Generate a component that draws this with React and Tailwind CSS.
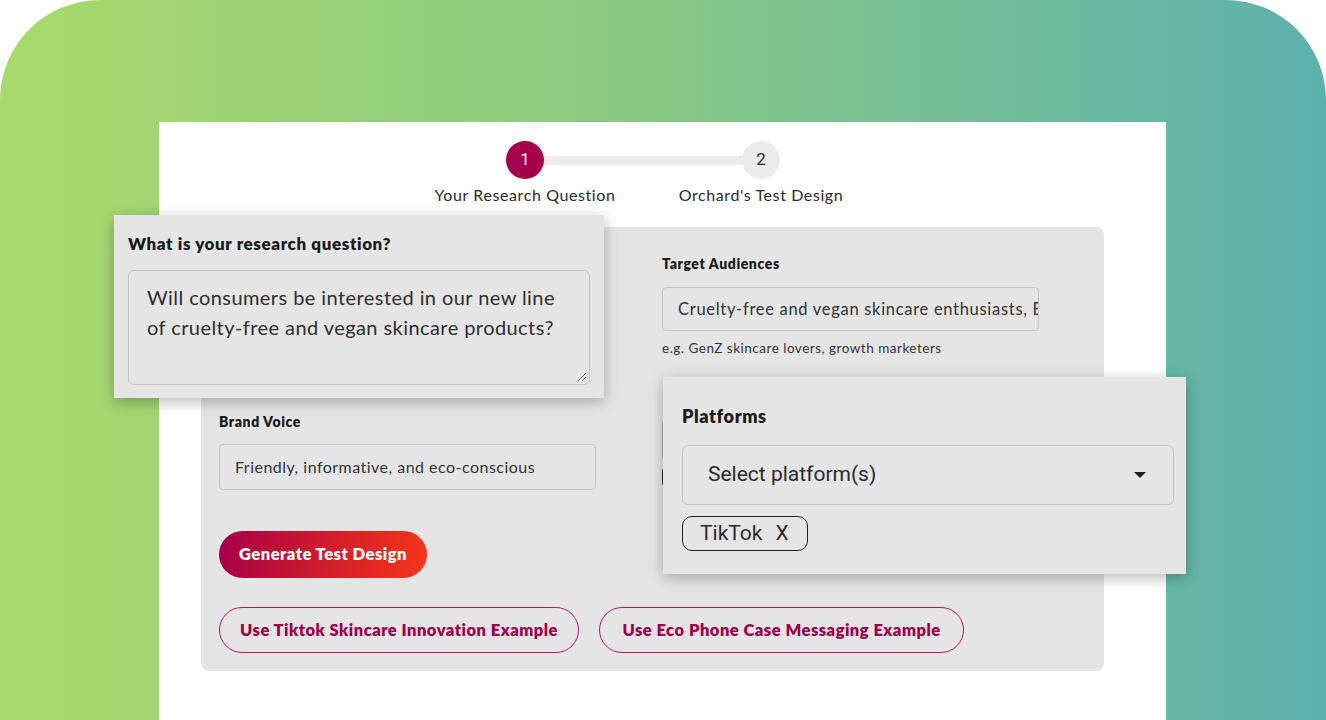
import React from "react";

const F = { fontFamily: "Lato, 'Open Sans', sans-serif" };
const R = { fontFamily: "Roboto, 'Liberation Sans', sans-serif" };

export default function App() {
  return (
    <div className="w-[1326px] h-[720px] bg-white overflow-hidden" style={F}>
      <div className="relative w-[1326px] h-[720px] rounded-t-[100px] bg-[linear-gradient(90deg,#a9d96c_0%,#8cca82_45%,#5cb1ae_100%)] pt-[122px] pl-[159px]">
        {/* white panel */}
        <div className="w-[1007px] h-[598px] bg-white flex flex-col">
          {/* stepper */}
          <div className="relative ml-[266px] mt-[19px] flex gap-[36px] w-[436px]">
            <div className="absolute left-[100px] right-[100px] top-[15px] h-[9px] bg-[#ececec]" />
            <div className="relative w-[200px] flex flex-col items-center">
              <div className="w-[38px] h-[38px] rounded-full bg-[#a4004b] text-white flex items-center justify-center text-[17px]" style={R}>1</div>
              <div className="mt-[6px] text-[16px] leading-[20px] tracking-[0.6px] text-[#2a2a2a] whitespace-nowrap">Your Research Question</div>
            </div>
            <div className="relative w-[200px] flex flex-col items-center">
              <div className="w-[38px] h-[38px] rounded-full bg-[#ececec] text-[#2a2a2a] flex items-center justify-center text-[17px]" style={R}>2</div>
              <div className="mt-[6px] text-[16px] leading-[20px] tracking-[0.6px] text-[#2a2a2a] whitespace-nowrap">Orchard's Test Design</div>
            </div>
          </div>

          {/* gray card */}
          <div className="ml-[42px] mt-[22px] w-[903px] h-[444px] rounded-[8px] bg-[#e5e5e5] pl-[18px] pt-[27px]">
            <div className="flex gap-[66px] h-[236px]">
              {/* left column */}
              <div className="w-[377px] flex flex-col">
                <div className="h-[158px]" />
                <div className="h-[20px] text-[14px] leading-[20px] font-extrabold tracking-[0.6px] text-[#1a1a1a]">Brand Voice</div>
                <div className="mt-[12px] h-[46px] rounded-[4px] border border-[#c4c4c4] flex items-center pl-[15px] text-[16px] tracking-[0.48px] text-[#333]">
                  Friendly, informative, and eco-conscious
                </div>
              </div>
              {/* right column */}
              <div className="w-[377px] flex flex-col">
                <div className="h-[20px] text-[14px] leading-[20px] font-extrabold tracking-[0.6px] text-[#1a1a1a]">Target Audiences</div>
                <div className="mt-[13px] h-[45px] rounded-[4px] border border-[#c4c4c4] flex items-center pl-[15px] text-[16.5px] tracking-[0.7px] text-[#333] overflow-hidden whitespace-nowrap">
                  Cruelty-free and vegan skincare enthusiasts, Eco
                </div>
                <div className="mt-[8px] h-[18px] text-[13.5px] leading-[18px] tracking-[0.5px] text-[#333] whitespace-nowrap">e.g. GenZ skincare lovers, growth marketers</div>
                <div className="mt-[62px] h-[43px] rounded-[4px] border border-[#b5b5b5]" />
                <div className="mt-[3px] w-[100px] h-[27px] rounded-[8px] border-[1.5px] border-[#222]" />
              </div>
            </div>

            <div className="mt-[41px] w-[208px] h-[47px] rounded-full bg-[linear-gradient(100deg,#a5004a_0%,#d01c2c_50%,#f7361a_100%)] text-white font-extrabold tracking-[0.5px] text-[16.5px] flex items-center justify-center">
              Generate Test Design
            </div>

            <div className="mt-[29px] flex gap-[20px]">
              <div className="w-[360px] h-[46px] rounded-full border border-[#b2195e] text-[#a0004a] font-extrabold tracking-[0.5px] text-[16.5px] flex items-center justify-center whitespace-nowrap">
                Use Tiktok Skincare Innovation Example
              </div>
              <div className="w-[365px] h-[46px] rounded-full border border-[#b2195e] text-[#a0004a] font-extrabold tracking-[0.5px] text-[16.5px] flex items-center justify-center whitespace-nowrap">
                Use Eco Phone Case Messaging Example
              </div>
            </div>
          </div>
        </div>

        {/* floating research question card */}
        <div className="absolute left-[114px] top-[215px] w-[490px] h-[183px] bg-[#e5e5e5] shadow-[0_4px_14px_rgba(0,0,0,0.28)] pl-[14px] pt-[18px]">
          <div className="text-[17px] leading-[22px] font-extrabold tracking-[0.6px] text-[#1a1a1a]">What is your research question?</div>
          <div className="relative mt-[15px] w-[462px] h-[115px] rounded-[6px] border-[1.5px] border-[#c4c4c4] pl-[18px] pt-[11px] text-[20px] leading-[30px] tracking-[0.43px] text-[#2e2e2e] whitespace-nowrap">
            Will consumers be interested in our new line
            <br />
            of cruelty-free and vegan skincare products?
            <svg className="absolute right-[2px] bottom-[2px]" width="12" height="12" viewBox="0 0 12 12">
              <path d="M11 3 L3 11 M11 7 L7 11" stroke="#6b6b6b" strokeWidth="1" fill="none" />
            </svg>
          </div>
        </div>

        {/* floating platforms card */}
        <div className="absolute left-[663px] top-[377px] w-[523px] h-[197px] bg-[#e5e5e5] shadow-[0_4px_14px_rgba(0,0,0,0.28)] pl-[19px] pt-[28px]">
          <div className="text-[18px] leading-[22px] font-extrabold tracking-[0.6px] text-[#1a1a1a]">Platforms</div>
          <div className="mt-[18px] w-[492px] h-[60px] rounded-[6px] border-[1.5px] border-[#c4c4c4] flex items-center justify-between pl-[25px] pr-[27px]">
            <span className="text-[21px] text-[#2a2a2a]" style={R}>Select platform(s)</span>
            <svg width="12" height="6" viewBox="0 0 12 6">
              <path d="M0 0 L12 0 L6 6 Z" fill="#1f1f1f" />
            </svg>
          </div>
          <div className="mt-[11px] w-[126px] h-[35px] rounded-[10px] border-[1.5px] border-[#222] flex items-center pl-[17px] text-[21px] text-[#2a2a2a]" style={R}>
            TikTok<span className="ml-[13px]">X</span>
          </div>
        </div>
      </div>
    </div>
  );
}
